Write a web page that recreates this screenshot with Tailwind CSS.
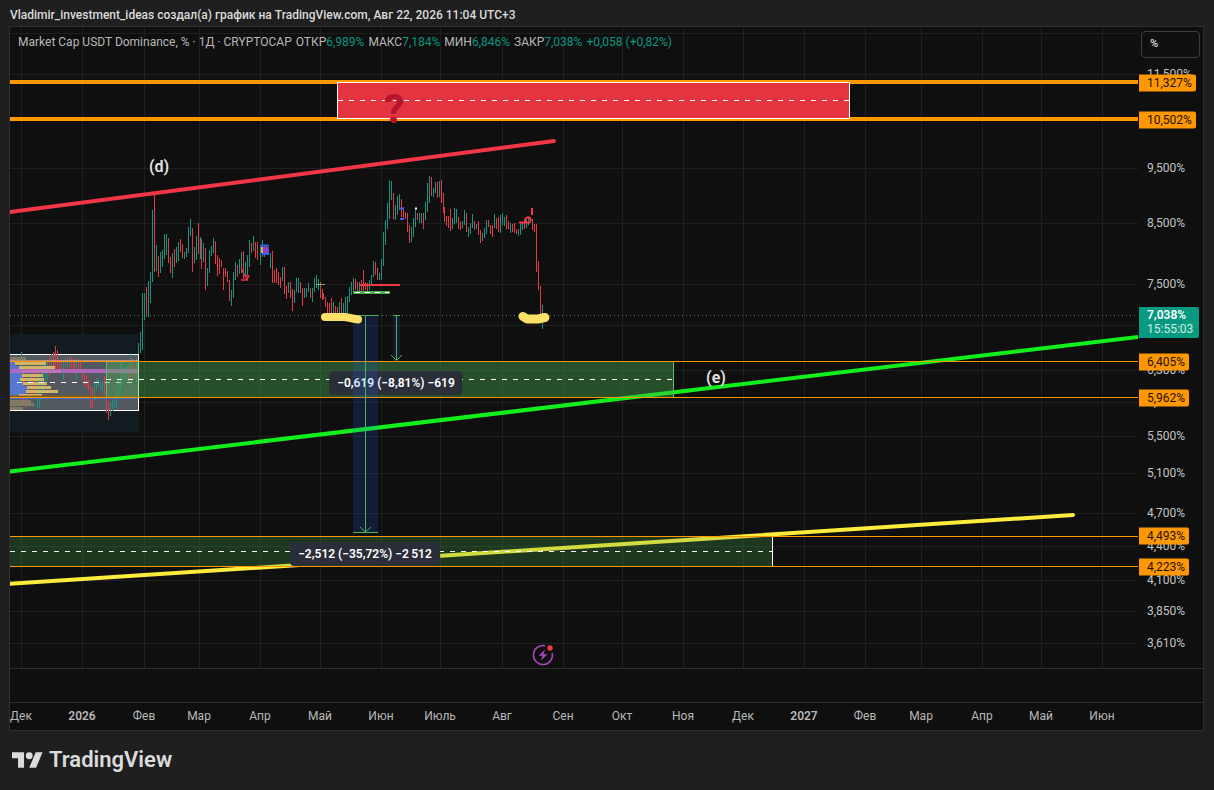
<!DOCTYPE html>
<html lang="ru">
<head>
  <meta charset="UTF-8" />
  <meta name="viewport" content="width=device-width, initial-scale=1.0"/>
  <title>Market Cap USDT Dominance, % — TradingView</title>
  <script src="https://cdn.jsdelivr.net/npm/@tailwindcss/browser@4"></script>
</head>
<body class="flex h-screen flex-col overflow-hidden bg-[#1f1f1f] font-[Roboto,'Noto_Sans',sans-serif] text-xs text-[#c4c4c4]">
  <header class="px-[10px] pt-[7px] pb-[3px]">
    <h1 class="whitespace-nowrap text-xs font-medium text-[#dbdbdb]">Vladimir_investment_ideas создал(а) график на TradingView.com, Авг 22, 2026 11:04 UTC+3</h1>
  </header>

  <main class="mr-[10px] ml-[9px] flex min-h-0 flex-1 flex-col border border-[#2e2e2e] bg-[#0f0f0f]">
    <div class="flex min-h-0 flex-1">
      <!-- price pane -->
      <section class="relative min-w-0 flex-1" id="pane">
        <svg class="absolute inset-0 size-full" viewBox="10 27 1128 641" preserveAspectRatio="none" fill="none">
          <g id="grid" stroke="#1f1f1f"></g>
          <rect x="10" y="334" width="129" height="98" fill="#111b20"/>

          <!-- trend lines -->
          <g stroke-linecap="round" stroke-width="4">
            <path d="M8 212.3L554 141" stroke="#f23645"/>
            <path d="M8 471.7L1140 336.8" stroke="#12f01c"/>
            <path d="M8 583.8L1073 515" stroke="#ffeb3b"/>
          </g>

          <!-- accumulation range with volume profile -->
          <rect x="8.5" y="354.5" width="130" height="56" fill="#9598a1" fill-opacity=".5" stroke="#fff"/>
          <g id="candles"></g>
          <g id="profile"></g>
          <path d="M10 371H138" stroke="#ba68c8" stroke-opacity=".85" stroke-width="4"/>
          <path d="M10 360.5H138" stroke="#e6a08a" stroke-opacity=".7"/>
          <path d="M10 396.5H138" stroke="#8a5a10" stroke-width="2"/>
          <path d="M10 398.5H138" stroke="#4a6fd0"/>
          <path d="M17 382.5H138" stroke="#fff" stroke-dasharray="5 6"/>

          <!-- support zones -->
          <rect x="106" y="362" width="568" height="35" fill="#4caf50" fill-opacity=".4"/>
          <path d="M106.5 362V397M673.5 362V397" stroke="#66bb6a"/>
          <path d="M106 379.5H674" stroke="#fff" stroke-dasharray="5 6"/>
          <rect x="10" y="537" width="763" height="29" fill="#4caf50" fill-opacity=".25"/>
          <path d="M772.5 537V566" stroke="#fff"/>
          <path d="M10 551.5H772" stroke="#fff" stroke-dasharray="5 6"/>

          <!-- price levels -->
          <g stroke="#ff9800">
            <path d="M10 82H1138M10 119H1138" stroke-width="4"/>
            <path d="M10 361.5H1138M10 397.5H1138M10 536.5H1138M10 566.5H1138"/>
          </g>

          <!-- resistance zone -->
          <rect x="337.5" y="82.5" width="512" height="36" fill="#e43440" stroke="#fff"/>
          <path d="M338 100.5H849" stroke="#fff" stroke-dasharray="5 6"/>

          <path d="M10 315.5H1138" stroke="#3f8578" stroke-dasharray="1 3"/>

          <!-- short levels and marks near the bars -->
          <path d="M360 285H400" stroke="#f23645" stroke-width="2"/>
          <path d="M353 292.5H390" stroke="#4caf50" stroke-width="3"/>
          <path d="M355 292.5H389" stroke="#fff" stroke-dasharray="5 5"/>
          <path d="M316 284.5H325" stroke="#66bb6a"/>
          <g stroke="#f23645" stroke-width="1.3">
            <path d="M241 268l6 12M241 280h7M245 276l4 0M247 280l2-5"/>
            <path d="M519 222.5h11M525 222c0-6 5-6 6-1" stroke-width="2"/>
            <path d="M532 208v7" stroke-width="2"/>
          </g>
          <path d="M261 245.5h8M262 254h7" stroke="#2962ff" stroke-width="2"/>
          <path d="M262 247v6" stroke="#e0a44e" stroke-width="2"/>
          <rect x="263" y="247" width="6" height="6" fill="#8e3fc4"/>
          <path d="M400 208.5h4M400 219h4" stroke="#3f5cf0" stroke-width="2"/>
          <path d="M415 208.5h2" stroke="#fff" stroke-width="2"/>

          <!-- short price range -->
          <rect x="393" y="316" width="7" height="45" fill="#2962ff" fill-opacity=".15"/>
          <path d="M393 315.5h7M396.5 316V360M391 355l5.500 5.500L402 355" stroke="#4caf50"/>
        </svg>

        <p class="absolute -translate-x-1/2 -translate-y-1/2 rounded bg-[#2a2e39] px-2 py-1 text-xs font-semibold whitespace-nowrap text-white" data-x="396" data-y="383">−0,619 (−8,81%) −619</p>
        <svg class="absolute inset-0 size-full" viewBox="10 27 1128 641" preserveAspectRatio="none" fill="none">
          <!-- long price range -->
          <rect x="353" y="316" width="25" height="216" fill="#2962ff" fill-opacity=".17"/>
          <path d="M353 315.5h25M353 532.500h25M365.500 316V532M360 527l5.500 5L371 527" stroke="#4caf50"/>
          <!-- highlighter over the lows -->
          <g stroke="#ffe066" stroke-width="8" stroke-linecap="round" stroke-linejoin="round">
            <path d="M325 317H345L358 319.500"/>
            <path d="M523 316.500L527 319H538L545 317.500" stroke-width="9"/>
          </g>
        </svg>
        <p class="absolute -translate-x-1/2 -translate-y-1/2 rounded bg-[#2a2e39] px-2 py-1 text-xs font-semibold whitespace-nowrap text-white" data-x="365" data-y="554">−2,512 (−35,72%) −2&thinsp;512</p>
        <p class="absolute -translate-x-1/2 -translate-y-1/2 text-base font-semibold text-[#e4e4e4]" data-x="159" data-y="167">(d)</p>
        <p class="absolute -translate-x-1/2 -translate-y-1/2 text-base font-semibold text-[#e4e4e4]" data-x="716" data-y="378">(e)</p>
        <p class="absolute -translate-x-1/2 -translate-y-1/2 text-[40px] leading-none font-extrabold text-[#b7152f]" data-x="394" data-y="110">?</p>

        <button class="absolute size-[22px] -translate-x-1/2 -translate-y-1/2" aria-label="События" data-x="543" data-y="655">
          <svg viewBox="0 0 22 22" fill="none">
            <path d="M13 1.800A9.500 9.500 0 1 0 20.200 9" stroke="#ab47bc" stroke-width="1.500"/>
            <path d="M13 5.500L6.500 11.800h4L9 16.500 15.500 10.200h-4z" fill="#ab47bc"/>
            <circle cx="18" cy="4" r="2.700" fill="#f23645"/>
          </svg>
        </button>

        <div class="absolute top-[7px] left-2 flex gap-1 whitespace-nowrap text-[#b8b8b8]">
          <h2>Market Cap USDT Dominance, % · 1Д · CRYPTOCAP</h2>
          <span>ОТКР<b class="font-normal text-[#089981]">6,989%</b></span>
          <span>МАКС<b class="font-normal text-[#089981]">7,184%</b></span>
          <span>МИН<b class="font-normal text-[#089981]">6,846%</b></span>
          <span>ЗАКР<b class="font-normal text-[#089981]">7,038%</b></span>
          <span class="text-[#089981]">+0,058 (+0,82%)</span>
        </div>
      </section>

      <!-- price axis -->
      <aside class="relative w-[65px] shrink-0" id="price-axis">
        <button class="absolute top-1 right-[3px] left-[3px] h-[27px] rounded border border-[#3d3d3d] px-2 text-left text-[11px] font-medium text-[#dbdbdb]">%</button>
      </aside>
    </div>

    <div class="h-[35px] shrink-0 border-y border-[#2e2e2e]"></div>
    <div class="relative mr-[65px] h-[27px] shrink-0 text-[#b8b8b8]" id="time-axis"></div>
  </main>

  <footer class="flex h-[59px] shrink-0 items-center gap-[6px] px-3 pb-[2px] text-[#dbdbdb]">
    <svg class="h-6 w-[31px]" viewBox="0 2 36 22" preserveAspectRatio="xMidYMid meet" fill="currentColor">
      <path d="M14 22H7V11H0V4h14v18zM28 22h-8l7.500-18h8L28 22z"/>
      <circle cx="20" cy="8" r="4"/>
    </svg>
    <span class="text-[22px] leading-7 font-semibold">TradingView</span>
  </footer>

  <script>
    // extent of the price pane in drawing units
    const PANE = { x: 10, y: 27, w: 1128, h: 641 };
    const left = x => `${(x - PANE.x) / PANE.w * 100}%`;
    const top_ = y => `${(y - PANE.y) / PANE.h * 100}%`;

    const months = [
      [21.5, 'Дек'], [82.5, '2026'], [144.5, 'Фев'], [199.5, 'Мар'], [260.5, 'Апр'], [320.5, 'Май'],
      [381.5, 'Июн'], [440.5, 'Июль'], [502.5, 'Авг'], [563.5, 'Сен'], [622.5, 'Окт'], [683.5, 'Ноя'],
      [743.5, 'Дек'], [804.5, '2027'], [865.5, 'Фев'], [921.5, 'Мар'], [982.5, 'Апр'], [1041.5, 'Май'], [1102.5, 'Июн'],
    ];
    const prices = [
      [33.5, ''], [74.5, '11,500%'], [168.5, '9,500%'], [223.5, '8,500%'], [284.5, '7,500%'], [325.5, ''],
      [370.5, '6,300%'], [402.5, '5,900%'], [436.5, '5,500%'], [473.5, '5,100%'], [513.5, '4,700%'],
      [546.5, '4,400%'], [580.5, '4,100%'], [611.5, '3,850%'], [643.5, '3,610%'],
    ];
    const levels = [[82.5, '11,327%'], [119.5, '10,502%'], [361.5, '6,405%'], [397.5, '5,962%'], [536.5, '4,493%'], [566.5, '4,223%']];

    document.getElementById('grid').innerHTML =
      months.map(([x]) => `<path d="M${x} 27V668"/>`).join('') +
      prices.map(([y]) => `<path d="M10 ${y}H1138"/>`).join('');

    // daily bars: high, low, g = up / r = down
    const DAY = 1.984;
    const series = [
      [11.5, '380 394 g,372 398 g,384 396 r,378 395 g,372 396 g,352 392 g,370 405 r,380 408 r,385 407 g,370 392 g,375 396 r,368 398 r,382 398 r,375 408 g,388 408 g,380 400 g,360 390 g,365 385 g,360 380 g,355 375 r,354 372 g,352 372 r,346 368 r,350 373 r,362 370 r,360 372 r,362 380 g,358 368 g,357 372 r,357 368 g,357 370 r,358 372 r,362 374 r,360 379 g,359 372 r,361 370 r,370 380 r,374 386 r,376 388 r,380 390 r,386 408 r,388 408 r,382 401 g,378 390 g,380 386 g,382 390 g,382 394 g,376 395 r,382 413 r,402 420 r,402 416 g,400 411 g,400 408 g,390 408 g,380 398 g,363 390 g,362 385 g,370 380 r,365 380 g,365 382 r,353 380 g,358 378 r,365 380 r,358 382 g'],
      [138.5, '343 354 g,332 353 g,293 350 g,293 320 g,287 317 r,281 317 g,272 303 g,210 282 g,194 272 r,245 271 g,256 277 r,252 273 g,250 267 g,234 259 g,234 255 g,238 263 r,257 273 r,253 278 g,249 267 r,247 263 g,242 261 g,239 252 r,244 258 r,252 259 g,248 257 g,227 253 g,219 236 g,228 272 r,247 263 g,236 260 g,223 254 r,237 259 g,239 269 r,243 262 g,248 290 r,268 286 g,250 273 g,246 256 g,238 253 g,241 264 r,255 276 r,258 274 r,260 267 r,268 290 r,268 277 r,271 282 r,280 301 r,290 306 g,272 298 g,262 280 g,265 277 r,259 274 g,252 273 g,251 279 r,262 277 g,255 275 g,240 267 g,243 253 r,236 251 g,242 258 r,242 260 r'],
      [260.5, '245 265 g,240 257 g,245 257 r,245 253 r,247 255 g,253 268 g,251 283 r,270 283 r,268 283 r,272 285 r,277 288 r,267 281 g,267 294 r,286 299 r,282 293 g,282 298 r,289 311 r,290 303 g,278 292 g,278 293 g,282 293 r,288 306 r,288 298 g,288 297 g,283 292 g,288 298 r,288 302 g,278 292 g,275 288 g,279 290 g,282 298 r,289 300 r,293 299 r,297 307 r,302 313 r,303 313 r,298 313 r,302 313 g,306 314 r,307 314 r,302 315 g,298 314 r,303 314 g,297 314 g,296 313 g,287 302 g,282 295 g,278 292 g,279 290 r,282 292 r,282 292 g,280 292 r,270 292 r,282 290 r,283 291 r,280 290 g,275 285 g,261 277 g,262 275 r,268 280 r,273 280 g'],
      [381.5, '259 280 g,232 266 g,220 245 g,203 229 g,180 219 g,181 200 g,193 219 r,205 220 g,196 215 g,194 210 g,199 217 r,207 217 r,212 219 r,213 232 r,225 243 r,227 242 g,218 237 g,210 227 g,213 220 r,213 223 g,213 223 g,213 229 r,202 220 g,183 212 g,176 203 g,177 196 r,188 197 g,182 193 g,182 198 r,181 197 g,180 203 r,193 213 r,207 222 r,216 226 r,216 228 r,209 231 r,218 229 g,208 224 g,209 223 g,217 229 r,222 230 r,221 228 g,210 225 g,213 232 r,227 237 g,223 234 g,214 228 g,221 230 r,224 229 g,221 235 r,230 243 r,233 241 g,228 238 g,220 234 g,220 227 r,225 234 r,225 237 r,214 228 g,218 229 r,217 232 r,215 233 g,213 225 g,217 226 g,215 229 r,221 229 r,223 233 g,224 232 r,223 233 r,229 234 r,229 236 g,223 235 g,222 230 g,220 229 r,219 228 g,217 225 g,217 223 r,219 230 r,224 232 r,224 272 r,261 290 r,286 317 r,305 329 g'],
    ];
    const barColor = { g: '#1a9480', r: '#e03b47' };
    document.getElementById('candles').innerHTML = series.map(([start, bars]) =>
      bars.split(',').map((bar, i) => {
        const [high, low, dir] = bar.split(' ');
        const x = Math.floor(start + i * DAY);
        return `<rect x="${x}" y="${high}" width="1" height="${low - high}" fill="${barColor[dir]}"/>`;
      }).join('')
    ).join('');

    // volume profile rows: y, blue part, full width, muted outside the value area
    const rows = [
      [357, 0, 16, 1], [362, 5, 36], [366, 9, 45], [370, 12, 51], [374, 12, 33], [378, 10, 34], [382, 13, 37],
      [386, 17, 41], [390, 16, 48], [394, 9, 32], [400, 0, 21, 1], [403, 0, 24, 1], [407, 0, 13, 1],
    ];
    document.getElementById('profile').innerHTML = rows.map(([y, blue, full, muted]) =>
      `<rect x="${10 + blue}" y="${y}" width="${full - blue}" height="3" fill="${muted ? '#8a8068' : '#e6c66a'}" fill-opacity=".85"/>` +
      `<rect x="10" y="${y}" width="${blue}" height="4" fill="#5b7bea" fill-opacity=".8"/>`
    ).join('');

    function addLabel(parent, text, className, style) {
      const el = document.createElement('span');
      el.textContent = text;
      el.className = className;
      Object.assign(el.style, style);
      parent.appendChild(el);
      return el;
    }

    const priceAxis = document.getElementById('price-axis');
    prices.filter(([, text]) => text).forEach(([y, text]) =>
      addLabel(priceAxis, text, 'absolute left-[9px] -translate-y-1/2 leading-4', { top: top_(y - 1) }));
    levels.forEach(([y, text]) =>
      addLabel(priceAxis, text, 'absolute left-px -translate-y-1/2 rounded-r-xs bg-[#ff9800] pr-1 pl-2 leading-[17px] text-[#1a1000]', { top: top_(y) }));
    const last = addLabel(priceAxis, '', 'absolute left-px flex w-[60px] flex-col rounded-r-xs bg-[#089981] pt-px pb-[2px] pl-2 leading-[14px] text-white', { top: top_(307) });
    addLabel(last, '7,038%', 'font-semibold', {});
    addLabel(last, '15:55:03', 'text-white/80', {});

    const timeAxis = document.getElementById('time-axis');
    months.forEach(([x, text]) =>
      addLabel(timeAxis, text, /^\d/.test(text) ? 'absolute -translate-x-1/2 leading-[27px] font-semibold' : 'absolute -translate-x-1/2 leading-[27px]', { left: left(x - 0.5) }));

    document.querySelectorAll('#pane [data-x]').forEach(el => {
      el.style.left = left(el.dataset.x);
      el.style.top = top_(el.dataset.y);
    });
  </script>
</body>
</html>
